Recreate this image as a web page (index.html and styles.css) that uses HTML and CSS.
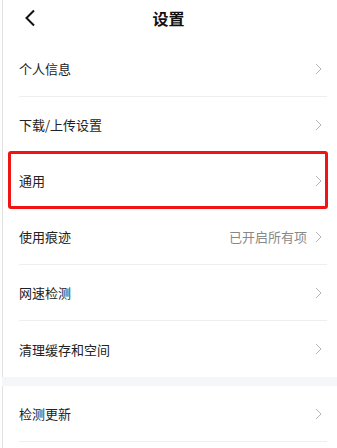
FILE: index.html
```html
<!DOCTYPE html>
<html>
<head>
<meta charset="utf-8">
<link rel="stylesheet" href="styles.css">
</head>
<body>
<div class="page">
  <header class="top">
    <svg class="back" width="12" height="18" viewBox="0 0 12 18"><path d="M10 1.5 L2.5 9 L10 16.5" fill="none" stroke="#111" stroke-width="2"/></svg>
    <div class="title">设置</div>
  </header>
  <div class="list">
    <div class="row"><span class="label">个人信息</span><span class="right"><svg class="chev" width="7" height="12" viewBox="0 0 7 12"><path d="M1 1 L6 6 L1 11" fill="none" stroke="#b4b4b4" stroke-width="1"/></svg></span></div>
    <div class="row"><span class="label">下载/上传设置</span><span class="right"><svg class="chev" width="7" height="12" viewBox="0 0 7 12"><path d="M1 1 L6 6 L1 11" fill="none" stroke="#b4b4b4" stroke-width="1"/></svg></span></div>
    <div class="row hl"><span class="label">通用</span><span class="right"><svg class="chev" width="7" height="12" viewBox="0 0 7 12"><path d="M1 1 L6 6 L1 11" fill="none" stroke="#b4b4b4" stroke-width="1"/></svg></span></div>
    <div class="row"><span class="label">使用痕迹</span><span class="right"><span class="val">已开启所有项</span><svg class="chev" width="7" height="12" viewBox="0 0 7 12"><path d="M1 1 L6 6 L1 11" fill="none" stroke="#b4b4b4" stroke-width="1"/></svg></span></div>
    <div class="row"><span class="label">网速检测</span><span class="right"><svg class="chev" width="7" height="12" viewBox="0 0 7 12"><path d="M1 1 L6 6 L1 11" fill="none" stroke="#b4b4b4" stroke-width="1"/></svg></span></div>
    <div class="row last"><span class="label">清理缓存和空间</span><span class="right"><svg class="chev" width="7" height="12" viewBox="0 0 7 12"><path d="M1 1 L6 6 L1 11" fill="none" stroke="#b4b4b4" stroke-width="1"/></svg></span></div>
  </div>
  <div class="band"></div>
  <div class="list">
    <div class="row"><span class="label">检测更新</span><span class="right"><svg class="chev" width="7" height="12" viewBox="0 0 7 12"><path d="M1 1 L6 6 L1 11" fill="none" stroke="#b4b4b4" stroke-width="1"/></svg></span></div>
  </div>
</div>
</body>
</html>
```
FILE: styles.css
```css
html, body { margin: 0; padding: 0; background: #fff; }
body {
  font-family: "Noto Sans CJK SC", "Noto Sans", sans-serif;
  color: #222;
  width: 337px;
  height: 448px;
  overflow: hidden;
}
.page {
  border-left: 1px solid #e2e2e2;
  margin-left: 2px;
  height: 448px;
}
.top {
  height: 41px;
  display: flex;
  align-items: center;
  justify-content: center;
  position: relative;
}
.back {
  position: absolute;
  left: 21px;
  top: 9px;
}
.title {
  font-size: 16px;
  font-weight: bold;
  color: #111;
  margin-left: -3px;
  margin-top: -5px;
}
.list { padding-left: 16px; padding-right: 10px; }
.row {
  height: 55px;
  border-bottom: 1px solid #eeeeee;
  display: flex;
  align-items: center;
  justify-content: space-between;
  font-size: 13px;
  position: relative;
}
.row.last { border-bottom: none; height: 56px; }
.label { line-height: 1; }
.right { display: flex; align-items: center; gap: 8px; padding-right: 5px; }
.val { color: #888; font-size: 13px; line-height: 1; }
.chev { display: block; }
.hl::after {
  content: "";
  position: absolute;
  left: -11px;
  right: -1px;
  top: -2px;
  bottom: -1px;
  border: 3px solid #f01414;
  border-radius: 3px;
}
.band { height: 9px; background: #f4f6f9; margin-left: -1px; }
```
